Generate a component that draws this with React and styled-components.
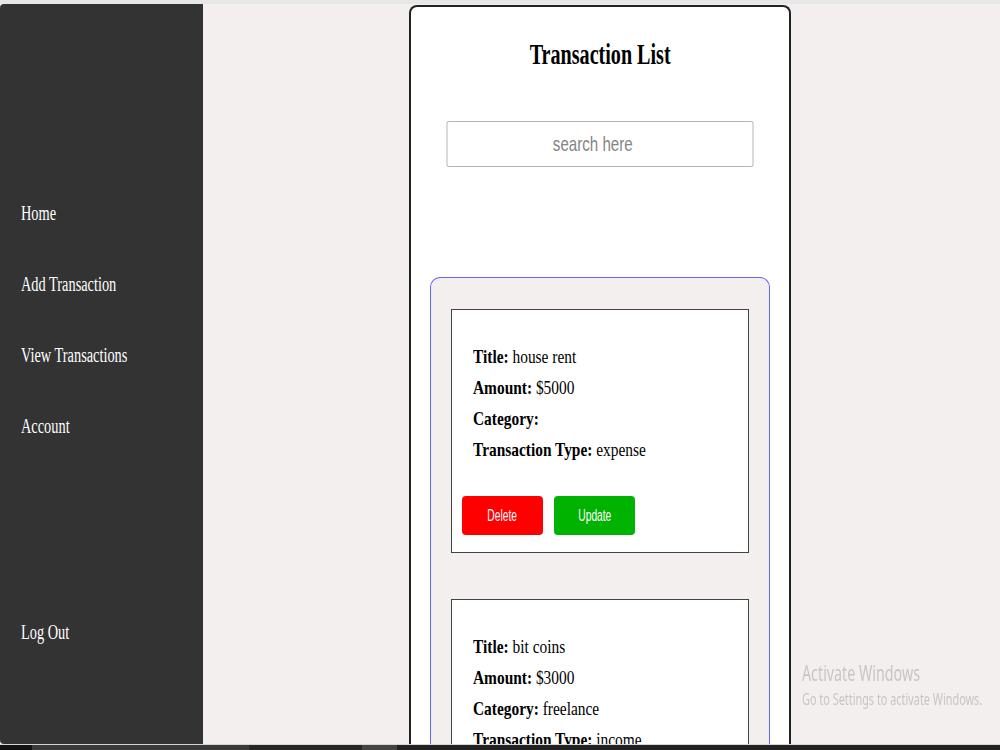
import React from "react";
import styled, { createGlobalStyle } from "styled-components";

const GlobalStyle = createGlobalStyle`
  * { box-sizing: border-box; }
  html, body { margin: 0; padding: 0; height: 750px; overflow: hidden; }
  body {
    font-family: "Liberation Serif", "Times New Roman", serif;
    background: #f4efef;
    color: #000;
  }
`;

const Screen = styled.div`
  width: 1000px;
  height: 750px;
  display: flex;
  flex-direction: column;
`;

const TopStrip = styled.div`
  height: 4px;
  flex-shrink: 0;
  background: #e7e7e7;
`;

const Workspace = styled.div`
  flex: 1;
  min-height: 0;
  display: flex;
  overflow: hidden;
`;

const Sidebar = styled.nav`
  width: 203px;
  flex-shrink: 0;
  background: #333333;
  border-radius: 4px 0 0 4px;
  display: flex;
  flex-direction: column;
  justify-content: space-between;
  padding: 197px 0 100px 21px;
`;

const NavGroup = styled.div`
  display: flex;
  flex-direction: column;
  gap: 47px;
`;

const NavLink = styled.a`
  display: block;
  color: #fff;
  font-size: 20.5px;
  line-height: 24px;
  text-decoration: none;
  white-space: nowrap;
  transform: scaleX(0.7);
  transform-origin: left center;
`;

const Main = styled.main`
  flex: 1;
  display: flex;
  justify-content: center;
  align-items: flex-start;
  padding-right: 3px;
`;

const Panel = styled.section`
  width: 382px;
  margin-top: 1px;
  border: 2px solid #222;
  border-bottom: none;
  border-radius: 8px 8px 0 0;
  background: #fff;
  display: flex;
  flex-direction: column;
  align-items: center;
  padding-top: 30px;
  padding-bottom: 40px;
`;

const Heading = styled.h1`
  margin: 0;
  font-size: 30px;
  line-height: 34px;
  font-weight: bold;
  white-space: nowrap;
  transform: scaleX(0.67);
`;

const SearchInput = styled.input`
  margin-top: 50px;
  flex-shrink: 0;
  width: 426px;
  height: 46px;
  border-style: solid;
  border-color: #a9a9a9;
  border-width: 1px 1.4px;
  border-radius: 2px;
  background: #fff;
  padding: 0 20px 0 0;
  font-family: "Liberation Sans", Arial, sans-serif;
  font-size: 21px;
  text-align: center;
  outline: none;
  transform: scaleX(0.72);
  &::placeholder {
    color: #858585;
  }
`;

const List = styled.div`
  margin-top: 110px;
  width: 340px;
  flex-shrink: 0;
  border: 1px solid #6464f5;
  border-bottom: none;
  border-radius: 10px 10px 0 0;
  background: #f4efef;
  padding: 31px 20px 40px;
  display: flex;
  flex-direction: column;
  gap: 46px;
`;

const Card = styled.article`
  border: 1px solid #444;
  background: #fff;
  padding: 31px 0 17px;
`;

const Details = styled.div`
  padding-left: 21px;
`;

const Line = styled.div`
  font-size: 19.5px;
  line-height: 31px;
  white-space: nowrap;
  transform: scaleX(0.79);
  transform-origin: left center;
  b {
    font-weight: bold;
  }
`;

const Actions = styled.div`
  margin-top: 31px;
  padding-left: 10px;
  display: flex;
  gap: 11px;
`;

const ActionButton = styled.button`
  width: 81px;
  height: 39px;
  border: none;
  border-radius: 4px;
  background: ${(p) => p.$tone};
  color: #fff;
  font-family: "Liberation Sans", Arial, sans-serif;
  font-size: 16px;
  padding: 0;
  cursor: pointer;
  span {
    display: inline-block;
    transform: scaleX(0.64);
  }
`;

const BottomBar = styled.div`
  height: 6px;
  flex-shrink: 0;
  border-top: 1px solid #d6d6d6;
  background: #222;
  display: flex;
`;

const BarSegment = styled.div`
  width: ${(p) => p.$w}px;
  background: ${(p) => p.$c};
`;

const Watermark = styled.div`
  position: fixed;
  left: 802px;
  top: 659px;
  color: #c9c5c5;
  font-family: "Noto Sans", "Open Sans", sans-serif;
  pointer-events: none;
  transform: scaleX(0.68);
  transform-origin: left top;
  white-space: nowrap;
`;

const WatermarkTitle = styled.div`
  font-size: 21px;
  line-height: 29px;
`;

const WatermarkHint = styled.div`
  font-size: 16px;
  line-height: 22px;
`;

const transactions = [
  { id: 1, title: "house rent", amount: 5000, category: "", type: "expense" },
  { id: 2, title: "bit coins", amount: 3000, category: "freelance", type: "income" },
];

function TransactionCard({ item }) {
  return (
    <Card>
      <Details>
        <Line>
          <b>Title:</b> {item.title}
        </Line>
        <Line>
          <b>Amount:</b> ${item.amount}
        </Line>
        <Line>
          <b>Category:</b> {item.category}
        </Line>
        <Line>
          <b>Transaction Type:</b> {item.type}
        </Line>
      </Details>
      <Actions>
        <ActionButton $tone="#ff0000">
          <span>Delete</span>
        </ActionButton>
        <ActionButton $tone="#00b300">
          <span>Update</span>
        </ActionButton>
      </Actions>
    </Card>
  );
}

export default function App() {
  return (
    <>
      <GlobalStyle />
      <Screen>
        <TopStrip />
        <Workspace>
          <Sidebar>
            <NavGroup>
              <NavLink href="#">Home</NavLink>
              <NavLink href="#">Add Transaction</NavLink>
              <NavLink href="#">View Transactions</NavLink>
              <NavLink href="#">Account</NavLink>
            </NavGroup>
            <NavLink href="#">Log Out</NavLink>
          </Sidebar>
          <Main>
            <Panel>
              <Heading>Transaction List</Heading>
              <SearchInput placeholder="search here" />
              <List>
                {transactions.map((t) => (
                  <TransactionCard key={t.id} item={t} />
                ))}
              </List>
            </Panel>
          </Main>
        </Workspace>
        <BottomBar>
          <BarSegment $w={32} $c="#111" />
          <BarSegment $w={217} $c="#3a3a3a" />
          <BarSegment $w={113} $c="#262626" />
          <BarSegment $w={35} $c="#444" />
        </BottomBar>
      </Screen>
      <Watermark>
        <WatermarkTitle>Activate Windows</WatermarkTitle>
        <WatermarkHint>Go to Settings to activate Windows.</WatermarkHint>
      </Watermark>
    </>
  );
}
